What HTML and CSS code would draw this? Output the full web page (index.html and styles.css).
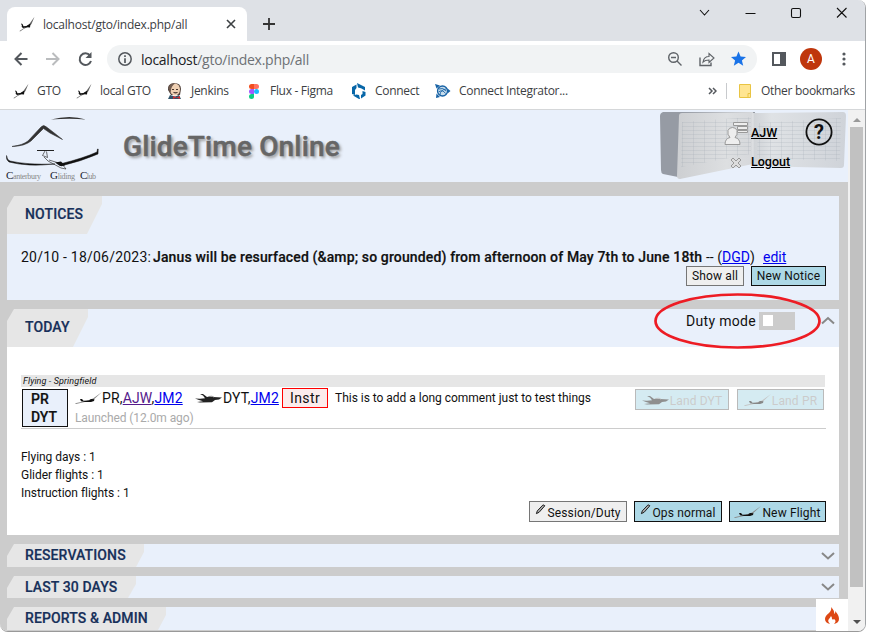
FILE: index.html
```html
<!DOCTYPE html>
<html lang="en">
<head>
<meta charset="utf-8">
<title>GlideTime Online</title>
<link rel="stylesheet" href="styles.css">
</head>
<body>
<svg class="defs" width="0" height="0">
  <symbol id="fav" viewBox="0 0 16 16"><path d="M.5 15L5 12 10 8.500 15.500.8 12.500 8 10 10.500 5 12.800 1 15.500Z" fill="#666"/><path d="M2 7.500L3.500 8 4.500 10.300Q8 10.300 11.500 7.500L11 11.500 8 11.200 4 12 2.500 10.800 3 10Z" fill="#111"/></symbol>
  <symbol id="glider" viewBox="0 0 28 14"><path d="M0 12.300L11 10 18 7.500 27 1 18.500 8.800 12 10.600 1 13Z" fill="#888"/><path d="M5 8L7 8 8.500 9.800 14 9.500 16 8 19.500 8.300 19 10 16 11 10 11 6 10.300Z" fill="#111"/></symbol>
  <symbol id="plane" viewBox="0 0 28 14"><path d="M0 7.500L5 7.800 10 7.300 8 4.500 5 3 8 3 12 6 14.500 5.500 18 6 27 6.500 24 8.500 20 9 17 11.300 5 11.500 2 11 8 10.300 4 9Z" fill="#222"/><path d="M13.500 5.500L17 5.200 19 6.200" fill="none" stroke="#888" stroke-width=".8"/></symbol>
  <symbol id="pencil" viewBox="0 0 12 12"><path d="M1.500 10.500L2.500 7.500 8.500 1.200Q10 .5 10.700 2L4.500 9Z" fill="#aaa" stroke="#111" stroke-width="1"/></symbol>
</svg>
<div class="window">
  <div class="tabstrip">
    <div class="tab"><svg class="fav" width="16" height="16"><use href="#fav"/></svg><span class="tab-title">localhost/gto/index.php/all</span>
      <svg class="close" width="10" height="10"><path d="M1 1l8 8M9 1L1 9" stroke="#3c4043" stroke-width="1.600"/></svg></div>
    <svg class="plus" width="12" height="12"><path d="M6 0v12M0 6h12" stroke="#333" stroke-width="1.800"/></svg>
    <svg class="controls" width="150" height="16" fill="none" stroke="#111" stroke-width="1.100"><path d="M1 6l4.500 5 4.500-5M46.500 9.500h10M138 4l9.500 9.500M147.500 4l-9.500 9.500"/><rect x="92.500" y="4.500" width="9" height="9" rx="1.500"/></svg>
  </div>
  <div class="toolbar">
    <svg class="nav" width="84" height="18" fill="none" stroke-width="2"><path d="M14.500 9H2.500M8.500 3l-6 6 6 6" stroke="#54585d"/><path d="M33 9h12.500M39.500 3l6 6-6 6" stroke="#babcbe"/><path d="M77 5.500A5.800 5.800 0 1 0 78 11" stroke="#54585d"/><path d="M78.500 2v6h-6z" fill="#54585d"/></svg>
    <div class="omnibox">
      <svg width="14" height="14" fill="none" stroke="#54585d" stroke-width="1.500"><circle cx="7" cy="7" r="6.200"/><path d="M7 3.300v1.600M7 6.200V11" stroke-width="1.700"/></svg>
      <span class="url">localhost<i>/gto/index.php/all</i></span>
      <svg class="omni-icons" width="82" height="18" fill="none" stroke="#5f6368" stroke-width="1.400"><circle cx="6.500" cy="7.500" r="4.800"/><path d="M4 7.500h5M10 11l4.500 4.500"/><path d="M33 7.500v8h11v-3"/><path d="M36 12q1-5.500 6-5.500V3.500l5 4.500-5 4.500v-2.500q-4 0-6 2z" stroke-width="1.100"/><path d="M71.500 1.500l2.100 5 5.400.4-4.100 3.500 1.300 5.300-4.700-2.900-4.700 2.900 1.300-5.300L64 6.900l5.400-.4z" fill="#1a73e8" stroke="none"/></svg>
    </div>
    <svg class="side" width="14" height="14"><path d="M0 0h14v14H0zM2 2v10h6V2z" fill="#54585d" fill-rule="evenodd"/></svg>
    <span class="avatar">A</span>
    <svg class="dots" width="4" height="14" fill="#54585d"><circle cx="2" cy="2" r="1.600"/><circle cx="2" cy="7" r="1.600"/><circle cx="2" cy="12" r="1.600"/></svg>
  </div>
  <div class="bookmarks">
    <svg class="b-icon i1" width="16" height="16"><use href="#fav"/></svg><span class="bt t1">GTO</span>
    <svg class="b-icon" width="16" height="16"><use href="#fav"/></svg><span class="bt t2">local GTO</span>
    <svg class="b-icon" width="16" height="16"><path d="M1 7Q0 1 7 0q7 0 7 6l-1 6H4z" fill="#51413a"/><ellipse cx="8" cy="6.500" rx="5" ry="6" fill="#efd0b3"/><path d="M2 5q0-5 6-4.500Q4 3 4 8l-1 2z" fill="#725d51"/><path d="M5 6.500h2M9 6.500h2M6.500 9.500q2 1 4 0" stroke="#48352c"/><path d="M1 16l2-4 5 1.500 4-1.500 2 4z" fill="#31536a"/><path d="M6 13l7 3v-3l-7 3z" fill="#cd3035"/></svg><span class="bt t3">Jenkins</span>
    <svg class="b-icon figma" width="12" height="16"><path d="M6 1H3.500a2.500 2.500 0 0 0 0 5H6z" fill="#f24e1e"/><path d="M6 1h2.500a2.500 2.500 0 0 1 0 5H6z" fill="#ff7262"/><path d="M6 6H3.500a2.500 2.500 0 0 0 0 5H6z" fill="#a259ff"/><circle cx="8.500" cy="8.500" r="2.500" fill="#1abcfe"/><path d="M6 11H3.500A2.500 2.500 0 1 0 6 13.500z" fill="#0acf83"/></svg><span class="bt t4">Flux - Figma</span>
    <svg class="b-icon" width="16" height="16" fill="#0867a8"><path d="M6 0l8 4v3.500L10 5.300 7 4.500zM1 4l4.500-2.500V5L4 7v5L1 11zM2 12.500l3.500-1L8 12l1 4H8zM14.500 9v3.500L10 15.500v-3.500l1.500-1V8z"/></svg><span class="bt t5">Connect</span>
    <svg class="b-icon" width="16" height="16" fill="none" stroke="#1762a5"><circle cx="7.500" cy="8" r="5" fill="#c7ddec" stroke-width="1.300"/><path d="M4 6q4-2 7 2M3.500 9q4-3 7 1.500M5 12q0-5 6-6" stroke-width=".9"/><path d="M0 1l5 1.500-3.500 3zM15.500 8l-3-2.500v5zM1 15l.5-4.500L5 14z" fill="#1762a5" stroke="none"/></svg><span class="bt t6">Connect Integrator...</span>
    <svg class="more" width="9" height="8" fill="none" stroke="#54585d" stroke-width="1.500"><path d="M1 1l3 3-3 3M5 1l3 3-3 3"/></svg>
    <i class="divider"></i>
    <svg class="folder" width="12" height="14"><path d="M.5.5h11v13H.5z" fill="#ffe592" stroke="#e9c443"/><path d="M9 13V9.500h2.500" fill="none" stroke="#e9c443"/></svg><span class="bt t7">Other bookmarks</span>
  </div>
  <div class="viewport">
    <main class="page">
      <header class="site-header">
        <svg class="logo" width="104" height="72">
          <path d="M51 9.500Q70 4.500 86 9.500 70 8 51 9.500Z" fill="#333"/>
          <path d="M12 36.500Q23 35 28 31L41 17q2.500-3 5.500 0L53 22 62.500 29.500 50 23 43.500 18.500 31 31Q25 36 12 36.500Z" fill="#333" stroke="#333" stroke-width=".6"/>
          <path d="M6.500 45.500Q7 50 10 51 27 55 55 54 28 57 9 52 6 50 6.500 45.500ZM60 54Q84 48 97 42l.5-3 .7 0-.2 5Q82 51 61 56Z" fill="#111" stroke="#111" stroke-width=".5"/>
          <path d="M37 40.500H54" stroke="#222"/><path d="M45 41l-2.500 4.500 5 2-1-6M44 47l4 4 13 7 5 1-4-5-13-4" fill="none" stroke="#333" stroke-width=".7"/><path d="M55 52.500l6-1 4 4-5 .5z" fill="#111"/>
          <g class="club"><text x="6" y="68.500" textLength="35"><tspan class="cap">C</tspan>anterbury</text><text x="50" y="68.500" textLength="25"><tspan class="cap">G</tspan>liding</text><text x="80" y="68.500" textLength="16"><tspan class="cap">C</tspan>lub</text></g>
        </svg>
        <h1>GlideTime Online</h1>
        <div class="account">
          <svg class="book" width="188" height="72">
            <defs><linearGradient id="lg"><stop stop-color="#cdcfd2"/><stop offset=".65" stop-color="#dddfe1"/><stop offset="1" stop-color="#d6d8db"/></linearGradient><linearGradient id="rg"><stop stop-color="#cfd2d6"/><stop offset=".2" stop-color="#dfe2e5"/><stop offset="1" stop-color="#cfd3d9"/></linearGradient>
            <pattern id="grid" width="11" height="4" patternUnits="userSpaceOnUse"><path d="M0 .5H11M.5 0V4" stroke="#9ca6b1" stroke-width=".22" fill="none"/></pattern></defs>
            <path d="M3 2H95V8L20 68 18 67 3 64Q1 63 1 60L0 6Q0 3 3 2Z" fill="#969ba4"/>
            <path d="M93 3L183 2q3 0 3 4l-2 49q0 3-3 3L93 56z" fill="url(#rg)"/><path d="M98 13L181 8 180 51 97 48z" fill="url(#grid)"/>
            <path d="M19 6q0-3 3-3L93 2V54L20 69q-3 0-3-3z" fill="url(#lg)"/><path d="M22 12L91 7V44L21 57z" fill="url(#grid)"/><path d="M93 3V55" stroke="#e2e4e6"/>
          </svg>
          <svg class="user" width="26" height="26" fill="#eee" stroke="#999"><path d="M9.500 1.500h14v3h-14zM13.500 5.500h10v3h-10zM13.500 9.500h10v2h-10z"/><path d="M1 23.500q0-6 5-7-3-3-2-7 1-3 4.500-3t4.500 3q1 4-2 7 5 1 5 7z"/></svg>
          <a class="ajw">AJW</a>
          <svg class="help" width="28" height="28"><circle cx="14" cy="14" r="12.600" fill="none" stroke="#111" stroke-width="1.800"/></svg><b class="q">?</b>
          <svg class="cross" width="12" height="12"><path d="M1 3l2-2 3 3 3-3 2 2-3 3 3 3-2 2-3-3-3 3-2-2 3-3z" fill="#ddd" stroke="#999"/></svg>
          <a class="logout">Logout</a>
        </div>
      </header>
      <section class="panel notices">
        <div class="label w-notices"><h2>NOTICES</h2></div>
        <p class="notice"><span class="dates">20/10 - 18/06/2023:</span><b>Janus will be resurfaced (&amp;amp; so grounded) from afternoon of May 7th to June 18th</b><span class="by">-- (<a>DGD</a>)</span><a>edit</a></p>
        <div class="notice-buttons"><button class="btn gray show">Show all</button><button class="btn newnotice">New Notice</button></div>
      </section>
      <section class="panel today">
        <div class="today-head"><div class="label w-today"><h2>TODAY</h2></div><div class="duty"><span>Duty mode</span><i class="switch"></i><svg class="chev" width="16" height="10"><path d="M2 7.500l6-5.500 6 5.500" fill="none" stroke="#888" stroke-width="2"/></svg></div></div>
        <div class="today-body">
          <div class="place">Flying - Springfield</div>
          <div class="flight">
            <div class="reg"><span>PR</span><span class="dyt">DYT</span></div>
            <div class="crew">
              <div class="line"><svg width="28" height="14"><use href="#glider"/></svg><span class="c1">PR,<a class="visited">AJW</a>,<a>JM2</a></span><svg width="28" height="14"><use href="#plane"/></svg><span class="c2">DYT,<a>JM2</a></span><em>Instr</em><span class="comment">This is to add a long comment just to test things</span></div>
              <div class="launched">Launched (12.0m ago)</div>
            </div>
            <div class="land"><button class="btn l1"><svg width="28" height="14"><use href="#plane"/></svg><span>Land DYT</span></button><button class="btn l2"><svg width="28" height="14"><use href="#glider"/></svg><span>Land PR</span></button></div>
          </div>
          <div class="stats"><span class="s1">Flying days : 1</span><span class="s2">Glider flights : 1</span><span class="s3">Instruction flights : 1</span></div>
          <div class="actions"><button class="btn gray a1"><svg class="pen" width="11" height="11"><use href="#pencil"/></svg><span>Session/Duty</span></button><button class="btn a2"><svg class="pen" width="11" height="11"><use href="#pencil"/></svg><span>Ops normal</span></button><button class="btn a3"><svg width="28" height="14"><use href="#glider"/></svg><span>New Flight</span></button></div>
        </div>
      </section>
      <section class="panel slim"><div class="label w-res"><h2>RESERVATIONS</h2></div><svg class="chev" width="16" height="10"><path d="M2 2l6 5.500L14 2" fill="none" stroke="#888" stroke-width="2"/></svg></section>
      <section class="panel slim days"><div class="label w-days"><h2>LAST 30 DAYS</h2></div><svg class="chev" width="16" height="10"><path d="M2 2l6 5.500L14 2" fill="none" stroke="#888" stroke-width="2"/></svg></section>
      <section class="panel slim"><div class="label w-rep"><h2>REPORTS &amp; ADMIN</h2></div></section>
    </main>
    <div class="scrollbar"><i class="up"></i><i class="thumb"></i><i class="down"></i></div>
  </div>
</div>
<div class="flame"><svg width="16" height="20"><path d="M7 1q4 4 3 7 2-1 1-3 4 4 4 8 0 4-5 5 3-3 0-5-1 1-2 0 0-2-1-3-1 2-2 3-2 2 1 5-5-1-5-5 0-3 4-6 3-3 2-6z" fill="#dd4814"/></svg></div>
<svg class="ring" width="170" height="60"><ellipse cx="84.500" cy="30" rx="82" ry="26.500" fill="none" stroke="#ed1c24" stroke-width="2.700"/></svg>
</body>
</html>
```
FILE: styles.css
```css
* { box-sizing: border-box; }
html, body { height: 100%; overflow: hidden; }
body { margin: 0; background: #fff; font-family: Roboto, sans-serif; font-size: 14px; color: #111; }
svg { display: block; flex: none; }
.defs { position: absolute; }
i, em { font-style: normal; }
span, b, a { white-space: nowrap; }
a { color: #0000ee; text-decoration: underline; }
.window { width: 866px; height: 632px; display: flex; flex-direction: column; border-right: 1px solid #a0a3a6; border-bottom: 1px solid #999; border-radius: 0 8px 8px 8px; overflow: hidden; background: #fff; }

.tabstrip { height: 41px; flex: none; background: #dee1e6; display: flex; align-items: flex-start; }
.tab { width: 240px; height: 34px; margin: 7px 0 0 7px; background: #fff; border-radius: 8px 8px 0 0; display: flex; align-items: center; font: 12px "Open Sans", sans-serif; color: #3c4043; }
.fav { margin-left: 12px; }
.tab-title { width: 164px; margin-left: 8px; letter-spacing: -.22px; }
.close { margin-left: 19px; }
.plus { margin: 18px 0 0 16px; }
.controls { margin: 4px 0 0 424px; }
.toolbar { height: 36px; flex: none; display: flex; align-items: center; }
.nav { margin-left: 13px; }
.omnibox { width: 650px; height: 28px; margin-left: 10px; background: #f1f3f4; border-radius: 14px; display: flex; align-items: center; padding-left: 11px; }
.url { width: 180px; margin-left: 9px; font: 14px "Open Sans", sans-serif; letter-spacing: -.27px; color: #202124; }
.url i { color: #6d7175; }
.omni-icons { margin-left: 346px; }
.side { margin-left: 15px; }
.avatar { width: 22px; height: 22px; margin-left: 14px; border-radius: 50%; background: #bf360c; color: #fff; font-size: 12px; line-height: 22px; text-align: center; }
.dots { margin-left: 20px; }
.bookmarks { height: 32px; flex: none; display: flex; align-items: center; font: 12px "Open Sans", sans-serif; color: #3c4043; padding-bottom: 5px; }
.b-icon { margin-right: 8px; }
.i1 { margin-left: 13px; }
.bt { letter-spacing: -.3px; flex: none; }
.t1 { width: 39px; }
.t2 { width: 67px; }
.t3 { width: 57px; }
.t4 { width: 81px; }
.t5 { width: 60px; }
.t6 { width: 111px; }
.figma { margin-right: 10px; }
.more { margin-left: 138px; }
.divider { width: 1px; height: 16px; margin-left: 9px; background: #c8cacd; }
.folder { margin: 0 10px 0 12px; }
.t7 { width: 95px; }
.viewport { flex: 1; display: flex; border-top: 1px solid #d5d7d9; overflow: hidden; }
.page { width: 848px; background: #ccc; overflow: hidden; }
.scrollbar { width: 17px; background: #f1f1f1; display: flex; flex-direction: column; align-items: center; }
.up { border: 4px solid transparent; border-top: 0; border-bottom: 4px solid #999; margin: 8px 0 5px; }
.thumb { width: 13px; height: 460px; background: #c1c1c1; }
.down { border: 4px solid transparent; border-bottom: 0; border-top: 4px solid #505050; margin-top: 33px; }

.site-header { height: 72px; background: #e9f0fb; display: flex; }
.club { font-family: "Liberation Serif", serif; font-size: 8px; fill: #888; }
.cap { font-size: 11px; fill: #17202b; }
h1 { width: 240px; margin: 17px 0 0 19px; font-size: 28px; line-height: 39px; letter-spacing: .15px; color: #666; white-space: nowrap; text-shadow: 2px 2px 3px #999; font-weight: 500; -webkit-text-stroke: .5px #666; }
.account { width: 188px; height: 72px; margin-left: 297px; display: grid; grid-template: 42px 30px / 62px 27px 54px 45px; }
.book { grid-area: 1 / 1 / 3 / 5; }
.user { grid-area: 1 / 2; margin: 11px 0 0 2px; }
.ajw, .logout { color: #000; font-size: 12.500px; font-weight: 500; line-height: 15px; }
.ajw { grid-area: 1 / 3; margin: 15px 0 0 2px; }
.help { grid-area: 1 / 4; margin: 8px 0 0 2px; }
.q { grid-area: 1 / 4; margin: 8px 0 0 2px; width: 28px; font-size: 20px; line-height: 28px; text-align: center; }
.cross { grid-area: 2 / 2; margin: 5px 0 0 8px; }
.logout { grid-area: 2 / 3; margin: 2px 0 0 2px; }

.panel { width: 832px; margin-left: 7px; background: linear-gradient(#ccc, #ccc) 0 0 / 7px 12px no-repeat, #e9f0fb; }
.label { padding: 0 0 2px 18px; background: #e6e6e6; display: flex; align-items: center; flex: none; }
.label h2 { margin: 0; font-size: 14px; line-height: 20px; font-weight: 500; letter-spacing: .12px; color: #17305a; white-space: nowrap; -webkit-text-stroke: .2px #17305a; }
.w-notices, .w-today { height: 38px; clip-path: polygon(7px 0, 100% 0, 100% 8px, calc(100% - 15px) 100%, 0 100%, 0 12px); }
.w-notices { width: 95px; }
.w-today { width: 81px; }
.slim .label { height: 100%; clip-path: polygon(7px 0, 100% 0, 100% 8px, calc(100% - 8px) 100%, 0 100%, 0 12px); }
.notices { height: 104px; margin-top: 14px; }
.notice { height: 19px; margin: 14px 0 0 14px; display: flex; line-height: 19px; }
.dates { width: 132px; letter-spacing: .22px; }
.notice b { width: 553px; font-weight: 500; -webkit-text-stroke: .2px #111; letter-spacing: .14px; }
.by { width: 57px; }
.notice-buttons, .actions { display: flex; justify-content: flex-end; gap: 7px; padding-right: 13px; }
.notice-buttons { margin-top: -1px; }
.btn { height: 20px; padding: 0; flex: none; display: flex; align-items: center; justify-content: center; border: 1px solid #111; background: #add8e6; color: #111; font: 12px Roboto, sans-serif; letter-spacing: .15px; }
.gray { background: #efefef; border-color: #767676; }
.show { width: 58px; }
.newnotice { width: 75px; }
.today { height: 226px; margin-top: 9px; }
.today-head { height: 38px; display: flex; justify-content: space-between; }
.duty { display: flex; height: 23px; align-items: center; padding-right: 3px; letter-spacing: .32px; }
.duty span { width: 73px; }
.switch { width: 36px; height: 18px; margin-right: 25px; padding: 3px 4px; background: #ccc; }
.switch::before { content: ""; display: block; width: 10px; height: 11px; background: #fff; }
.today-body { height: 188px; background: #fff; padding-top: 28px; }
.place { width: 804px; height: 12px; margin-left: 14px; padding-left: 2px; background: #e6e6e6; font-size: 9px; line-height: 12px; font-style: italic; letter-spacing: .1px; }
.flight { width: 805px; height: 42px; margin-left: 14px; border-bottom: 1px solid #ccc; display: flex; }
.reg { width: 46px; height: 38px; margin: 2px 0 0 1px; border: 1px solid #111; background: #e9f0fb; padding: 0 0 0 8px; display: flex; flex-direction: column; font-size: 14px; font-weight: 500; line-height: 18px; -webkit-text-stroke: .2px #111; }
.crew { width: 567px; padding-left: 7px; }
.line { height: 22px; display: flex; align-items: center; }
.line > svg { margin-top: -1px; }
.c1, .c2 { letter-spacing: .15px; }
.c1 { width: 93px; margin-left: -1px; }
.c2 { width: 59px; }
.visited { color: #551a8b; }
.line em { width: 46px; height: 20px; margin-right: 7px; border: 1px solid red; background: #fcecec; text-align: center; line-height: 18px; letter-spacing: .4px; }
.comment { font-size: 12px; letter-spacing: -.02px; }
.launched { font-size: 12px; line-height: 18px; letter-spacing: -.1px; color: #aaa; }
.land { display: flex; gap: 8px; padding-top: 2px; }
.land .btn { height: 21px; opacity: .5; color: #999; border-color: #777; }
.btn svg + span { padding-top: 3px; }
.btn .pen { margin: -4px 1px 0 0; }
.l1 { width: 94px; }
.l2 { width: 87px; }
.stats { display: flex; flex-direction: column; margin: 19px 0 0 14px; font-size: 12px; line-height: 18px; letter-spacing: -.03px; }
.actions { margin-top: -1px; }
.actions .btn { height: 21px; }
.a1 { width: 98px; }
.a2 { width: 88px; }
.a3 { width: 97px; }
.slim { height: 23px; margin-top: 9px; display: flex; align-items: center; justify-content: space-between; padding-right: 3px; }
.days { height: 22px; }
.days .label { padding-bottom: 0; }
.w-res { width: 137px; }
.w-days { width: 129px; }
.w-rep { width: 159px; }
.flame { position: absolute; left: 816px; top: 599px; width: 32px; height: 32px; background: #fff; padding: 7px 8px; }
.ring { position: absolute; left: 653px; top: 291px; }
```
